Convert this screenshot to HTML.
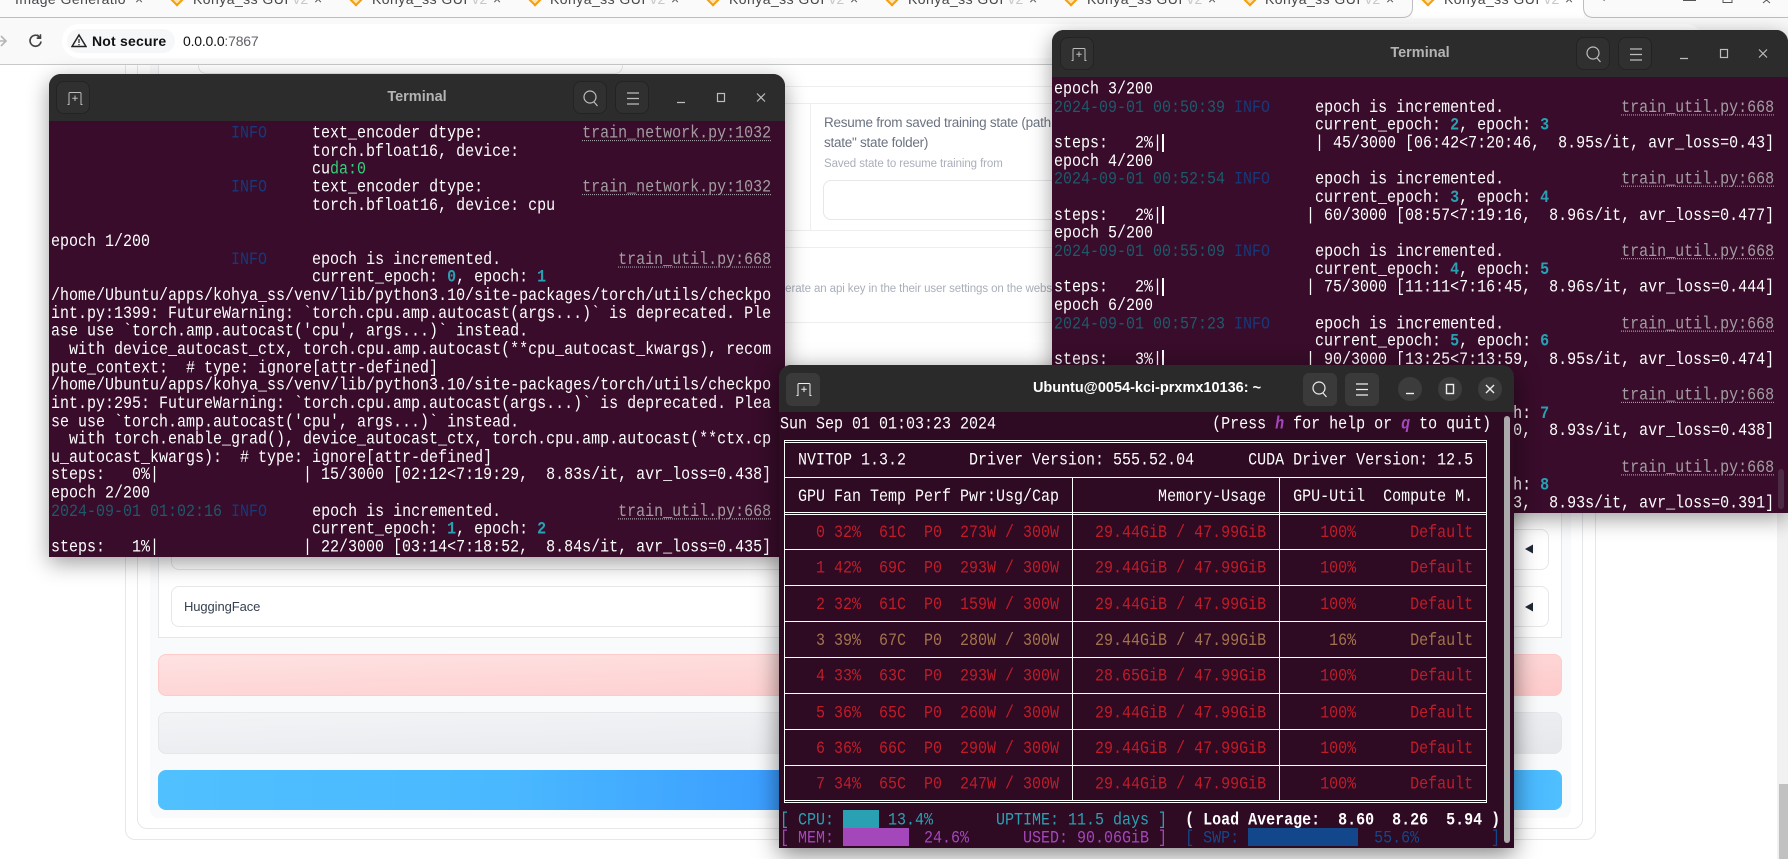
<!DOCTYPE html>
<html lang="en"><head><meta charset="utf-8"><title>Kohya_ss GUI</title>
<style>
html,body{margin:0;padding:0;width:1788px;height:859px;overflow:hidden;background:#fff}
body{position:relative;font-family:"Liberation Sans",sans-serif}
.a{position:absolute}
.box{position:absolute;box-sizing:border-box;border:1px solid #e5e7eb}
.tabt{position:absolute;top:-11px;line-height:20px;font-size:14px;letter-spacing:.45px;color:#45474a;white-space:nowrap}
.tabt i{font-style:normal;color:#c6c7c9}
.tabx{position:absolute;top:-11px;line-height:20px;font-size:14px;color:#555}
.fav{position:absolute;top:-8px;width:10px;height:10px;border:2.5px solid #f59e0b;border-top:0;border-left:0;transform:rotate(45deg);background:#fde3b0}
.term{position:absolute;overflow:hidden;border-radius:12px 12px 0 0;box-shadow:0 6px 22px rgba(0,0,0,.38);background:#380c2a}
.hd{position:absolute;left:0;top:0;right:0;height:47px;background:#2c2c2c}
.btn{position:absolute;width:34px;height:33px;top:7px;box-sizing:border-box;background:#303030;border:1px solid #232323;border-radius:8px}
.btn svg,.ctl svg{position:absolute;left:0;top:0}
.ttl{position:absolute;top:0;line-height:47px;font-size:14.5px;font-weight:700;color:#b4b4b4;transform:translateX(-50%);white-space:nowrap}
.ctl{position:absolute;top:11px;width:24px;height:24px}
pre{position:absolute;left:2px;top:51px;margin:0;font:15px/15.652px "Liberation Mono",monospace;color:#fff;transform-origin:0 0;transform:scaleY(1.15);white-space:pre}
.d{color:#1d5a6b}.i{color:#17397a}
.u{color:#a39da2;text-decoration:underline dotted;text-underline-offset:2px;text-decoration-thickness:1px}
.n{color:#2aa1b3;font-weight:700}.g{color:#33d17a}
.r{color:#c01c28}.y{color:#a2734c}.c{color:#2aa1b3}.m{color:#a347ba}.b{color:#12488b}
.h{color:#a347ba;font-weight:700;font-style:italic}.w{font-weight:700}
.bar{position:absolute;width:2px;height:18px;background:#fff}
.hl{position:absolute;height:1px;background:#eee}
.vl{position:absolute;width:1px;background:#eee}
.t3 .btn{background:#3a3a3a;border:0;border-radius:6px}
.t3 .hd{background:#2a2a2a}
.t3{background:#2e0a23}
.t3 .ttl{color:#fff}
.t3 pre{left:1px}
.circ{position:absolute;width:24px;height:24px;border-radius:50%;background:#3c3c3c;top:12px}
.circ svg{position:absolute;left:0;top:0}
</style></head><body>

<!-- page behind -->
<div class="box" style="left:125px;top:40px;width:1471px;height:800px;border-radius:10px"></div>
<div class="box" style="left:137px;top:40px;width:1446px;height:789px;border-radius:10px"></div>
<div class="a" style="left:150px;top:40px;width:1421px;height:778px;background:#f9fafb;border-radius:8px"></div>
<div class="box" style="left:158px;top:40px;width:1404px;height:598px;background:#fff"></div>
<div class="box" style="left:171px;top:529px;width:1378px;height:41px;border-radius:8px;background:#fff"></div>
<div class="box" style="left:171px;top:586px;width:1378px;height:41px;border-radius:8px;background:#fff"></div>
<div class="box" style="left:198px;top:40px;width:425px;height:34px;border-radius:8px;background:#fff"></div>
<div class="a" style="left:184px;top:597px;font-size:13px;letter-spacing:-.1px;line-height:20px;color:#374151">HuggingFace</div>
<svg class="a" style="left:1524px;top:543px" width="10" height="12"><path d="M9 1.5V10.5L1 6Z" fill="#1f2937"/></svg>
<svg class="a" style="left:1524px;top:601px" width="10" height="12"><path d="M9 1.5V10.5L1 6Z" fill="#1f2937"/></svg>
<div class="box" style="left:158px;top:654px;width:1404px;height:42px;border-radius:8px;border-color:#fecaca;background:linear-gradient(to bottom right,#fee2e2,#fecaca)"></div>
<div class="box" style="left:158px;top:712px;width:1404px;height:42px;border-radius:8px;background:linear-gradient(to bottom right,#f3f4f6,#e5e7eb)"></div>
<div class="a" style="left:158px;top:770px;width:1404px;height:40px;border-radius:8px;background:linear-gradient(92deg,#50c0ff 0,#4ab8ff 25%,#3a9cff 45%,#3a9cff 55%,#47b2ff 95%,#4fc0ff 100%)"></div>

<!-- mid panel -->
<div class="a" style="left:640px;top:64px;width:420px;height:300px;background:#fff"></div>
<div class="hl" style="left:700px;top:86px;width:360px"></div>
<div class="hl" style="left:700px;top:103px;width:360px"></div>
<div class="hl" style="left:700px;top:230px;width:360px"></div>
<div class="hl" style="left:700px;top:247px;width:360px"></div>
<div class="hl" style="left:700px;top:322px;width:360px"></div>
<div class="vl" style="left:810px;top:103px;height:127px"></div>
<div class="a" style="left:824px;top:113px;width:228px;overflow:hidden;font-size:13.5px;letter-spacing:-.25px;line-height:20px;color:#6b7280;white-space:nowrap">Resume from saved training state (path<br>state" state folder)</div>
<div class="a" style="left:824px;top:155px;font-size:11.5px;letter-spacing:-.1px;line-height:18px;color:#a9afba;white-space:nowrap">Saved state to resume training from</div>
<div class="box" style="left:823px;top:180px;width:300px;height:40px;border-radius:8px;background:#fff"></div>
<div class="a" style="left:700px;top:280px;width:352px;text-align:right;overflow:hidden;font-size:11.5px;letter-spacing:-.1px;line-height:18px;color:#a9afba;white-space:nowrap;direction:rtl">Generate an api key in the their user settings on the webs</div>

<!-- scrollbar -->
<div class="a" style="left:1777px;top:500px;width:11px;height:359px;background:#f1f1f1"></div>
<div class="a" style="left:1779px;top:784px;width:9px;height:75px;background:#c1c1c1"></div>

<!-- browser chrome -->
<div class="a" style="left:0;top:0;width:1788px;height:18px;background:#fafafa;overflow:hidden">
<div class="a" style="left:1412px;top:0;width:172px;height:18px;background:#fff"></div>
<div class="tabt" style="left:15px">Image Generatio</div><div class="tabx" style="left:135px">×</div>
<div class="fav" style="left:171px"></div><div class="tabt" style="left:193px">Kohya_ss GUI <i>v2</i></div><div class="tabx" style="left:314px">×</div>
<div class="fav" style="left:350px"></div><div class="tabt" style="left:372px">Kohya_ss GUI <i>v2</i></div><div class="tabx" style="left:493px">×</div>
<div class="fav" style="left:529px"></div><div class="tabt" style="left:550px">Kohya_ss GUI <i>v2</i></div><div class="tabx" style="left:671px">×</div>
<div class="fav" style="left:707px"></div><div class="tabt" style="left:729px">Kohya_ss GUI <i>v2</i></div><div class="tabx" style="left:850px">×</div>
<div class="fav" style="left:886px"></div><div class="tabt" style="left:908px">Kohya_ss GUI <i>v2</i></div><div class="tabx" style="left:1029px">×</div>
<div class="fav" style="left:1065px"></div><div class="tabt" style="left:1087px">Kohya_ss GUI <i>v2</i></div><div class="tabx" style="left:1208px">×</div>
<div class="fav" style="left:1244px"></div><div class="tabt" style="left:1265px">Kohya_ss GUI <i>v2</i></div><div class="tabx" style="left:1386px">×</div>
<div class="fav" style="left:1422px"></div><div class="tabt" style="left:1444px">Kohya_ss GUI <i>v2</i></div><div class="tabx" style="left:1565px">×</div>
<div class="tabx" style="left:1600px;top:-13px">+</div>
<svg class="a" style="left:1680px;top:0" width="100" height="6" fill="none" stroke="#555"><path d="M3 .5H16M43-2v4.5h9V-2M83-3l7 6M90-3l-7 6"/></svg>
<svg class="a" style="left:0;top:0" width="1788" height="18" fill="none" stroke="#bcbdbf"><path d="M0 17.5H1402Q1412 17.5 1412.5 8V0M1583.5 0V8Q1584 17.5 1594 17.5H1788"/></svg>
</div>
<div class="a" style="left:0;top:18px;width:1788px;height:46px;background:#f9f9f9;border-bottom:1px solid #c8c9ca"></div>
<svg class="a" style="left:0;top:33px" width="8" height="16" fill="none" stroke="#b5b5b5" stroke-width="1.6"><path d="M-6 8H5M1 3l5 5-5 5"/></svg>
<svg class="a" style="left:28px;top:33px" width="16" height="16" fill="none" stroke="#444" stroke-width="1.7"><path d="M13 8.5A5.5 5.5 0 1 1 11.2 3.6"/><path d="M9.5 1V5H13.5" stroke="none" fill="#444"/><path d="M12.5 1.2V5.2H8.7" stroke-width="1.5"/></svg>
<div class="a" style="left:62px;top:24px;width:1641px;height:34px;background:#fff;border-radius:17px"></div>
<div class="a" style="left:67px;top:29px;width:108px;height:24px;background:#f6f7f8;border-radius:12px"></div>
<svg class="a" style="left:71px;top:33px" width="16" height="15" fill="none" stroke="#222" stroke-width="1.5"><path d="M8 2 15 13.5H1Z"/><path d="M8 6V10M8 11V12.3" stroke-width="1.2"/></svg>
<div class="a" style="left:92px;top:31px;font-size:14px;letter-spacing:.2px;font-weight:700;line-height:20px;color:#111;white-space:nowrap">Not secure</div>
<div class="a" style="left:183px;top:31px;font-size:14px;letter-spacing:-.2px;line-height:20px;color:#111;white-space:nowrap">0.0.0.0<span style="color:#5f6368">:7867</span></div>

<!-- Terminal 1 -->
<div class="term" style="left:49px;top:74px;width:736px;height:483px;z-index:10">
<div class="hd">
<div class="btn" style="left:7px"><svg width="34" height="33" fill="none" stroke="#bdbdbd"><path d="M10.5 22.5H12V11.5Q12 10.5 13 10.5H23Q24 10.5 24 11.5V22.5H25.5M18 13.5V19M15.3 16.2H20.7"/></svg></div>
<div class="ttl" style="left:368px">Terminal</div>
<div class="btn" style="left:524px"><svg width="34" height="33" fill="none" stroke="#bdbdbd" stroke-width="1.2"><circle cx="16" cy="15" r="6"/><path d="M20 20l3.5 4"/></svg></div>
<div class="btn" style="left:566px"><svg width="34" height="33" fill="none" stroke="#bdbdbd" stroke-width="1.2"><path d="M11 11H23M11 16.5H23M11 22H23"/></svg></div>
<div class="ctl" style="left:620px"><svg width="24" height="24" fill="none" stroke="#bdbdbd" stroke-width="1.2"><path d="M8 17.5H16"/></svg></div>
<div class="ctl" style="left:660px"><svg width="24" height="24" fill="none" stroke="#bdbdbd" stroke-width="1.2"><rect x="8.5" y="8.5" width="7" height="8"/></svg></div>
<div class="ctl" style="left:700px"><svg width="24" height="24" fill="none" stroke="#bdbdbd" stroke-width="1.2"><path d="M8 8.5l8 8M16 8.5l-8 8"/></svg></div>
</div>
<pre>                    <span class="i">INFO</span>     text_encoder dtype:           <span class="u">train_network.py:1032</span>
                             torch.bfloat16, device:
                             cu<span class="g">da:0</span>
                    <span class="i">INFO</span>     text_encoder dtype:           <span class="u">train_network.py:1032</span>
                             torch.bfloat16, device: cpu

epoch 1/200
                    <span class="i">INFO</span>     epoch is incremented.             <span class="u">train_util.py:668</span>
                             current_epoch: <span class="n">0</span>, epoch: <span class="n">1</span>
/home/Ubuntu/apps/kohya_ss/venv/lib/python3.10/site-packages/torch/utils/checkpo
int.py:1399: FutureWarning: `torch.cpu.amp.autocast(args...)` is deprecated. Ple
ase use `torch.amp.autocast('cpu', args...)` instead.
  with device_autocast_ctx, torch.cpu.amp.autocast(**cpu_autocast_kwargs), recom
pute_context:  # type: ignore[attr-defined]
/home/Ubuntu/apps/kohya_ss/venv/lib/python3.10/site-packages/torch/utils/checkpo
int.py:295: FutureWarning: `torch.cpu.amp.autocast(args...)` is deprecated. Plea
se use `torch.amp.autocast('cpu', args...)` instead.
  with torch.enable_grad(), device_autocast_ctx, torch.cpu.amp.autocast(**ctx.cp
u_autocast_kwargs):  # type: ignore[attr-defined]
steps:   0%|                | 15/3000 [02:12&lt;7:19:29,  8.83s/it, avr_loss=0.438]
epoch 2/200
<span class="d">2024-09-01 01:02:16</span> <span class="i">INFO</span>     epoch is incremented.             <span class="u">train_util.py:668</span>
                             current_epoch: <span class="n">1</span>, epoch: <span class="n">2</span>
steps:   1%|                | 22/3000 [03:14&lt;7:18:52,  8.84s/it, avr_loss=0.435]</pre>
</div>

<!-- Terminal 2 -->
<div class="term" style="left:1052px;top:30px;width:736px;height:483px;z-index:11">
<div class="hd">
<div class="btn" style="left:8px"><svg width="34" height="33" fill="none" stroke="#bdbdbd"><path d="M10.5 22.5H12V11.5Q12 10.5 13 10.5H23Q24 10.5 24 11.5V22.5H25.5M18 13.5V19M15.3 16.2H20.7"/></svg></div>
<div class="ttl" style="left:368px">Terminal</div>
<div class="btn" style="left:524px"><svg width="34" height="33" fill="none" stroke="#bdbdbd" stroke-width="1.2"><circle cx="16" cy="15" r="6"/><path d="M20 20l3.5 4"/></svg></div>
<div class="btn" style="left:566px"><svg width="34" height="33" fill="none" stroke="#bdbdbd" stroke-width="1.2"><path d="M11 11H23M11 16.5H23M11 22H23"/></svg></div>
<div class="ctl" style="left:620px"><svg width="24" height="24" fill="none" stroke="#bdbdbd" stroke-width="1.2"><path d="M8 17.5H16"/></svg></div>
<div class="ctl" style="left:660px"><svg width="24" height="24" fill="none" stroke="#bdbdbd" stroke-width="1.2"><rect x="8.5" y="8.5" width="7" height="8"/></svg></div>
<div class="ctl" style="left:699px"><svg width="24" height="24" fill="none" stroke="#bdbdbd" stroke-width="1.2"><path d="M8 8.5l8 8M16 8.5l-8 8"/></svg></div>
</div>
<div class="bar" style="left:110px;top:104px"></div><div class="bar" style="left:110px;top:176px"></div><div class="bar" style="left:110px;top:248px"></div><div class="bar" style="left:110px;top:320px"></div>
<div class="a" style="left:726px;top:439px;width:6px;height:40px;border-radius:3px;background:#4c2a43"></div>
<pre>epoch 3/200
<span class="d">2024-09-01 00:50:39</span> <span class="i">INFO</span>     epoch is incremented.             <span class="u">train_util.py:668</span>
                             current_epoch: <span class="n">2</span>, epoch: <span class="n">3</span>
steps:   2%|                 | 45/3000 [06:42&lt;7:20:46,  8.95s/it, avr_loss=0.43]
epoch 4/200
<span class="d">2024-09-01 00:52:54</span> <span class="i">INFO</span>     epoch is incremented.             <span class="u">train_util.py:668</span>
                             current_epoch: <span class="n">3</span>, epoch: <span class="n">4</span>
steps:   2%|                | 60/3000 [08:57&lt;7:19:16,  8.96s/it, avr_loss=0.477]
epoch 5/200
<span class="d">2024-09-01 00:55:09</span> <span class="i">INFO</span>     epoch is incremented.             <span class="u">train_util.py:668</span>
                             current_epoch: <span class="n">4</span>, epoch: <span class="n">5</span>
steps:   2%|                | 75/3000 [11:11&lt;7:16:45,  8.96s/it, avr_loss=0.444]
epoch 6/200
<span class="d">2024-09-01 00:57:23</span> <span class="i">INFO</span>     epoch is incremented.             <span class="u">train_util.py:668</span>
                             current_epoch: <span class="n">5</span>, epoch: <span class="n">6</span>
steps:   3%|                | 90/3000 [13:25&lt;7:13:59,  8.95s/it, avr_loss=0.474]
epoch 7/200
<span class="d">2024-09-01 00:59:38</span> <span class="i">INFO</span>     epoch is incremented.             <span class="u">train_util.py:668</span>
                             current_epoch: <span class="n">6</span>, epoch: <span class="n">7</span>
steps:   3%|               | 105/3000 [15:38&lt;7:11:10,  8.93s/it, avr_loss=0.438]
epoch 8/200
<span class="d">2024-09-01 01:01:52</span> <span class="i">INFO</span>     epoch is incremented.             <span class="u">train_util.py:668</span>
                             current_epoch: <span class="n">7</span>, epoch: <span class="n">8</span>
steps:   4%|               | 120/3000 [17:53&lt;7:08:53,  8.93s/it, avr_loss=0.391]</pre>
</div>

<!-- Terminal 3 -->
<div class="term t3" style="left:779px;top:365px;width:735px;height:483px;z-index:12;box-shadow:0 6px 24px rgba(0,0,0,.5)">
<div class="hd">
<div class="btn" style="left:7px;top:8px"><svg width="34" height="33" fill="none" stroke="#eee"><path d="M10.5 22.5H12V11.5Q12 10.5 13 10.5H23Q24 10.5 24 11.5V22.5H25.5M18 13.5V19M15.3 16.2H20.7"/></svg></div>
<div class="ttl" style="left:368px">Ubuntu@0054-kci-prxmx10136: ~</div>
<div class="btn" style="left:524px;top:8px"><svg width="34" height="33" fill="none" stroke="#eee" stroke-width="1.2"><circle cx="16" cy="15" r="6"/><path d="M20 20l3.5 4"/></svg></div>
<div class="btn" style="left:566px;top:8px"><svg width="34" height="33" fill="none" stroke="#eee" stroke-width="1.2"><path d="M11 11H23M11 16.5H23M11 22H23"/></svg></div>
<div class="circ" style="left:619px"><svg width="24" height="24" fill="none" stroke="#eee" stroke-width="1.4"><path d="M8 16.5H16"/></svg></div>
<div class="circ" style="left:659px"><svg width="24" height="24" fill="none" stroke="#eee" stroke-width="1.4"><rect x="8.5" y="7.5" width="7" height="9"/></svg></div>
<div class="circ" style="left:699px"><svg width="24" height="24" fill="none" stroke="#eee" stroke-width="1.4"><path d="M8 8l8 8M16 8l-8 8"/></svg></div>
</div>
<!-- table lines -->
<div class="a" style="left:5px;top:75px;width:702px;height:1px;background:#fff"></div>
<div class="a" style="left:5px;top:77px;width:702px;height:1px;background:#fff"></div>
<div class="a" style="left:5px;top:112px;width:702px;height:1px;background:#fff"></div>
<div class="a" style="left:5px;top:147px;width:702px;height:1px;background:#fff"></div>
<div class="a" style="left:5px;top:149px;width:702px;height:1px;background:#fff"></div>
<div class="a" style="left:5px;top:184px;width:702px;height:1px;background:#fff"></div>
<div class="a" style="left:5px;top:220px;width:702px;height:1px;background:#fff"></div>
<div class="a" style="left:5px;top:256px;width:702px;height:1px;background:#fff"></div>
<div class="a" style="left:5px;top:292px;width:702px;height:1px;background:#fff"></div>
<div class="a" style="left:5px;top:328px;width:702px;height:1px;background:#fff"></div>
<div class="a" style="left:5px;top:364px;width:702px;height:1px;background:#fff"></div>
<div class="a" style="left:5px;top:400px;width:702px;height:1px;background:#fff"></div>
<div class="a" style="left:5px;top:435px;width:702px;height:1px;background:#fff"></div>
<div class="a" style="left:5px;top:437px;width:702px;height:1px;background:#fff"></div>
<div class="a" style="left:5px;top:75px;width:1px;height:363px;background:#fff"></div>
<div class="a" style="left:707px;top:75px;width:1px;height:363px;background:#fff"></div>
<div class="a" style="left:293px;top:112px;width:1px;height:324px;background:#fff"></div>
<div class="a" style="left:500px;top:112px;width:1px;height:324px;background:#fff"></div>
<!-- meters -->
<div class="a" style="left:64px;top:445px;width:36px;height:18px;background:#2aa1b3"></div>
<div class="a" style="left:64px;top:463px;width:66px;height:18px;background:#a347ba"></div>
<div class="a" style="left:469px;top:463px;width:110px;height:18px;background:#12488b"></div>
<div class="a" style="left:725px;top:51px;width:6px;height:427px;border-radius:3px;background:#ababab"></div>
<pre>Sun Sep 01 01:03:23 2024                        (Press <span class="h">h</span> for help or <span class="h">q</span> to quit)

  NVITOP 1.3.2       Driver Version: 555.52.04      CUDA Driver Version: 12.5

  GPU Fan Temp Perf Pwr:Usg/Cap           Memory-Usage   GPU-Util  Compute M.

<span class="r">    0 32%  61C  P0  273W / 300W    29.44GiB / 47.99GiB      100%      Default</span>

<span class="r">    1 42%  69C  P0  293W / 300W    29.44GiB / 47.99GiB      100%      Default</span>

<span class="r">    2 32%  61C  P0  159W / 300W    29.44GiB / 47.99GiB      100%      Default</span>

<span class="y">    3 39%  67C  P0  280W / 300W    29.44GiB / 47.99GiB       16%      Default</span>

<span class="r">    4 33%  63C  P0  293W / 300W    28.65GiB / 47.99GiB      100%      Default</span>

<span class="r">    5 36%  65C  P0  260W / 300W    29.44GiB / 47.99GiB      100%      Default</span>

<span class="r">    6 36%  66C  P0  290W / 300W    29.44GiB / 47.99GiB      100%      Default</span>

<span class="r">    7 34%  65C  P0  247W / 300W    29.44GiB / 47.99GiB      100%      Default</span>

<span class="c">[ CPU:      13.4%       UPTIME: 11.5 days ]</span>  <span class="w">( Load Average:  8.60  8.26  5.94 )</span>
<span class="m">[ MEM:          24.6%      USED: 90.06GiB ]</span>  <span class="b">[ SWP:               55.6%        ]</span></pre>
</div>
</body></html>
